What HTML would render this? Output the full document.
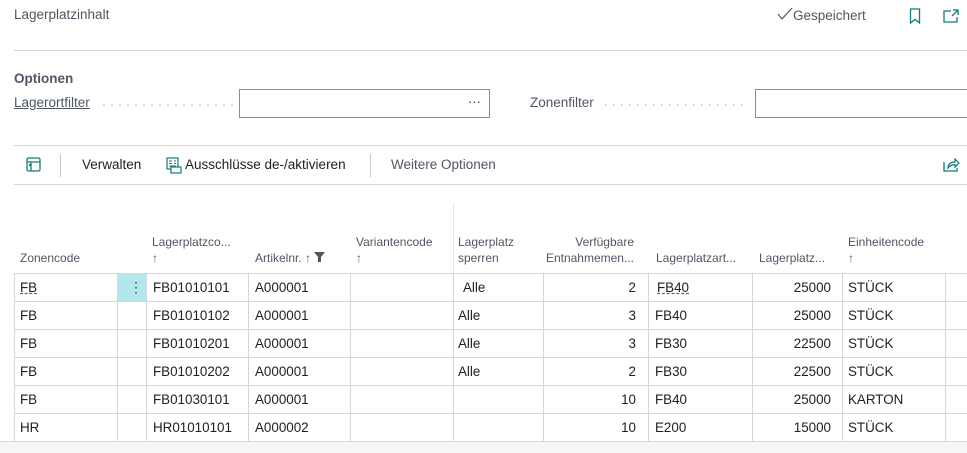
<!DOCTYPE html>
<html><head><meta charset="utf-8"><style>
*{margin:0;padding:0;box-sizing:border-box}
body{width:967px;height:453px;overflow:hidden;background:#fff;font-family:"Segoe UI","Liberation Sans",sans-serif;color:#212121;position:relative;font-size:14px}
.a{position:absolute;white-space:nowrap}
.hl{position:absolute;height:1px;background:#d6d6d9}
.vl{position:absolute;width:1px;background:#d6d6d9}
.h{color:#505762;font-size:12px;line-height:16px}
.c{font-size:13.4px;line-height:28px;color:#212121}
.r{text-align:right}
.dots{position:absolute;height:2px;background:radial-gradient(circle,#cfcfcf 0.8px,transparent 1px) 0 0/8px 2px repeat-x}
</style></head><body>
<div class="a" style="left:14px;top:7px;font-size:13.5px;color:#505762">Lagerplatzinhalt</div>
<div class="a" style="left:777px;top:7px;font-size:13.5px;color:#505762"><svg width="16" height="14" viewBox="0 0 16 14" style="vertical-align:-1px"><path d="M1 7l4 5L15 1" fill="none" stroke="#505762" stroke-width="1.2"/></svg>Gespeichert</div>
<svg class="a" style="left:909px;top:8px" width="12" height="16" viewBox="0 0 12 16"><path d="M1.5 1h9v14l-4.5-3.5L1.5 15z" fill="none" stroke="#0e7c7b" stroke-width="1.3"/></svg>
<svg class="a" style="left:943px;top:9px" width="16" height="14" viewBox="0 0 16 14"><path d="M8 2H1v11h13V8M10 1h5v5M15 1l-6 6" fill="none" stroke="#0e7c7b" stroke-width="1.3"/></svg>
<div class="hl" style="left:14px;top:50px;width:953px"></div>
<div class="a" style="left:14px;top:71px;font-size:13.5px;font-weight:bold;color:#505762">Optionen</div>
<div class="a" style="left:14px;top:95px;font-size:13.5px;color:#505762;text-decoration:underline">Lagerortfilter</div>
<div class="dots" style="left:100px;top:104px;width:133px"></div>
<div class="a" style="left:239px;top:89px;width:251px;height:29px;border:1px solid #8a8e94"></div>
<div class="a" style="left:468px;top:94px;font-size:13px;color:#333">···</div>
<div class="a" style="left:530px;top:95px;font-size:13.5px;color:#505762">Zonenfilter</div>
<div class="dots" style="left:602px;top:104px;width:145px"></div>
<div class="a" style="left:755px;top:89px;width:230px;height:29px;border:1px solid #8a8e94"></div>
<div class="hl" style="left:14px;top:145px;width:953px"></div>
<svg class="a" style="left:26px;top:157px" width="16" height="16" viewBox="0 0 16 16"><rect x="1" y="1" width="13" height="13" rx="1.5" fill="none" stroke="#0e7c7b" stroke-width="1.3"/><path d="M1 5h13M5 5v9" stroke="#0e7c7b" stroke-width="1.3"/><rect x="3" y="7" width="2" height="2" fill="#0e7c7b"/></svg>
<div class="vl" style="left:60px;top:154px;height:23px;background:#c8c8c8"></div>
<div class="a" style="left:82px;top:157px;font-size:13.5px;color:#212121">Verwalten</div>
<svg class="a" style="left:166px;top:157px" width="16" height="17" viewBox="0 0 16 17"><rect x="1" y="1" width="11" height="11" fill="none" stroke="#0e7c7b" stroke-width="1.2"/><path d="M3 4h3M8 4h2M3 6.5h3M8 6.5h2M3 9h7" stroke="#0e7c7b"/><rect x="5" y="10" width="10" height="6" fill="#fff" stroke="#0e7c7b" stroke-width="1.2"/></svg>
<div class="a" style="left:185px;top:157px;font-size:13.5px;color:#212121">Ausschlüsse de-/aktivieren</div>
<div class="vl" style="left:370px;top:154px;height:23px;background:#c8c8c8"></div>
<div class="a" style="left:391px;top:157px;font-size:13.5px;color:#505762">Weitere Optionen</div>
<svg class="a" style="left:943px;top:157px" width="17" height="15" viewBox="0 0 17 15"><path d="M1 5v9h13v-3" fill="none" stroke="#0e7c7b" stroke-width="1.3"/><path d="M5 11c0-4 3-6 7-6V2l4 4-4 4V7.5c-3 0-5 1-7 3.5z" fill="none" stroke="#0e7c7b" stroke-width="1.2"/></svg>
<div class="hl" style="left:14px;top:184px;width:953px"></div>
<div class="vl" style="left:453px;top:203px;height:70px;background:#e6e6e6"></div>
<div class="a h" style="left:20px;top:250px">Zonencode</div>
<div class="a h" style="left:152px;top:234px">Lagerplatzco...<br>↑</div>
<div class="a h" style="left:255px;top:250px">Artikelnr. ↑ <svg width="11" height="10" viewBox="0 0 11 10"><path d="M0 0h11L7 5v5H4V5z" fill="#505762"/></svg></div>
<div class="a h" style="left:356px;top:234px">Variantencode<br>↑</div>
<div class="a h" style="left:458px;top:234px">Lagerplatz<br>sperren</div>
<div class="a h r" style="left:543px;top:234px;width:91px">Verfügbare<br>Entnahmemen...</div>
<div class="a h" style="left:656px;top:250px">Lagerplatzart...</div>
<div class="a h" style="left:759px;top:250px">Lagerplatz...</div>
<div class="a h" style="left:848px;top:234px">Einheitencode<br>↑</div>
<div class="hl" style="left:14px;top:273px;width:953px"></div>
<div class="a" style="left:117px;top:274px;width:29px;height:27px;background:#b2e8ec"></div>
<div class="a" style="left:129px;top:274px;line-height:27px;font-size:14px;color:#444">⋮</div>
<div class="hl" style="left:14px;top:301px;width:953px"></div>
<div class="hl" style="left:14px;top:329px;width:953px"></div>
<div class="hl" style="left:14px;top:357px;width:953px"></div>
<div class="hl" style="left:14px;top:385px;width:953px"></div>
<div class="hl" style="left:14px;top:413px;width:953px"></div>
<div class="hl" style="left:0;top:441px;width:967px"></div>
<div class="a" style="left:0;top:442px;width:967px;height:11px;background:#f5f6f7"></div>
<div class="vl" style="left:14px;top:273px;height:168px"></div>
<div class="vl" style="left:117px;top:273px;height:168px"></div>
<div class="vl" style="left:146px;top:273px;height:168px"></div>
<div class="vl" style="left:248px;top:273px;height:168px"></div>
<div class="vl" style="left:350px;top:273px;height:168px"></div>
<div class="vl" style="left:453px;top:273px;height:168px"></div>
<div class="vl" style="left:543px;top:273px;height:168px"></div>
<div class="vl" style="left:648px;top:273px;height:168px"></div>
<div class="vl" style="left:752px;top:273px;height:168px"></div>
<div class="vl" style="left:842px;top:273px;height:168px"></div>
<div class="vl" style="left:945px;top:273px;height:168px"></div>
<div class="a c" style="left:20px;top:274px;text-decoration:underline dashed #666">FB</div>
<div class="a c" style="left:153px;top:274px">FB01010101</div><div class="a c" style="left:255px;top:274px">A000001</div><div class="a c" style="left:463px;top:274px">Alle</div><div class="a c r" style="left:543px;top:274px;width:93px">2</div><div class="a c" style="left:657px;top:274px;text-decoration:underline dashed #666">FB40</div><div class="a c r" style="left:752px;top:274px;width:79px">25000</div><div class="a c" style="left:848px;top:274px">STÜCK</div>
<div class="a c" style="left:20px;top:302px">FB</div><div class="a c" style="left:153px;top:302px">FB01010102</div><div class="a c" style="left:255px;top:302px">A000001</div><div class="a c" style="left:458px;top:302px">Alle</div><div class="a c r" style="left:543px;top:302px;width:93px">3</div><div class="a c" style="left:655px;top:302px">FB40</div><div class="a c r" style="left:752px;top:302px;width:79px">25000</div><div class="a c" style="left:848px;top:302px">STÜCK</div>
<div class="a c" style="left:20px;top:330px">FB</div><div class="a c" style="left:153px;top:330px">FB01010201</div><div class="a c" style="left:255px;top:330px">A000001</div><div class="a c" style="left:458px;top:330px">Alle</div><div class="a c r" style="left:543px;top:330px;width:93px">3</div><div class="a c" style="left:655px;top:330px">FB30</div><div class="a c r" style="left:752px;top:330px;width:79px">22500</div><div class="a c" style="left:848px;top:330px">STÜCK</div>
<div class="a c" style="left:20px;top:358px">FB</div><div class="a c" style="left:153px;top:358px">FB01010202</div><div class="a c" style="left:255px;top:358px">A000001</div><div class="a c" style="left:458px;top:358px">Alle</div><div class="a c r" style="left:543px;top:358px;width:93px">2</div><div class="a c" style="left:655px;top:358px">FB30</div><div class="a c r" style="left:752px;top:358px;width:79px">22500</div><div class="a c" style="left:848px;top:358px">STÜCK</div>
<div class="a c" style="left:20px;top:386px">FB</div><div class="a c" style="left:153px;top:386px">FB01030101</div><div class="a c" style="left:255px;top:386px">A000001</div><div class="a c r" style="left:543px;top:386px;width:93px">10</div><div class="a c" style="left:655px;top:386px">FB40</div><div class="a c r" style="left:752px;top:386px;width:79px">25000</div><div class="a c" style="left:848px;top:386px">KARTON</div>
<div class="a c" style="left:20px;top:414px">HR</div><div class="a c" style="left:153px;top:414px">HR01010101</div><div class="a c" style="left:255px;top:414px">A000002</div><div class="a c r" style="left:543px;top:414px;width:93px">10</div><div class="a c" style="left:655px;top:414px">E200</div><div class="a c r" style="left:752px;top:414px;width:79px">15000</div><div class="a c" style="left:848px;top:414px">STÜCK</div>
</body></html>
